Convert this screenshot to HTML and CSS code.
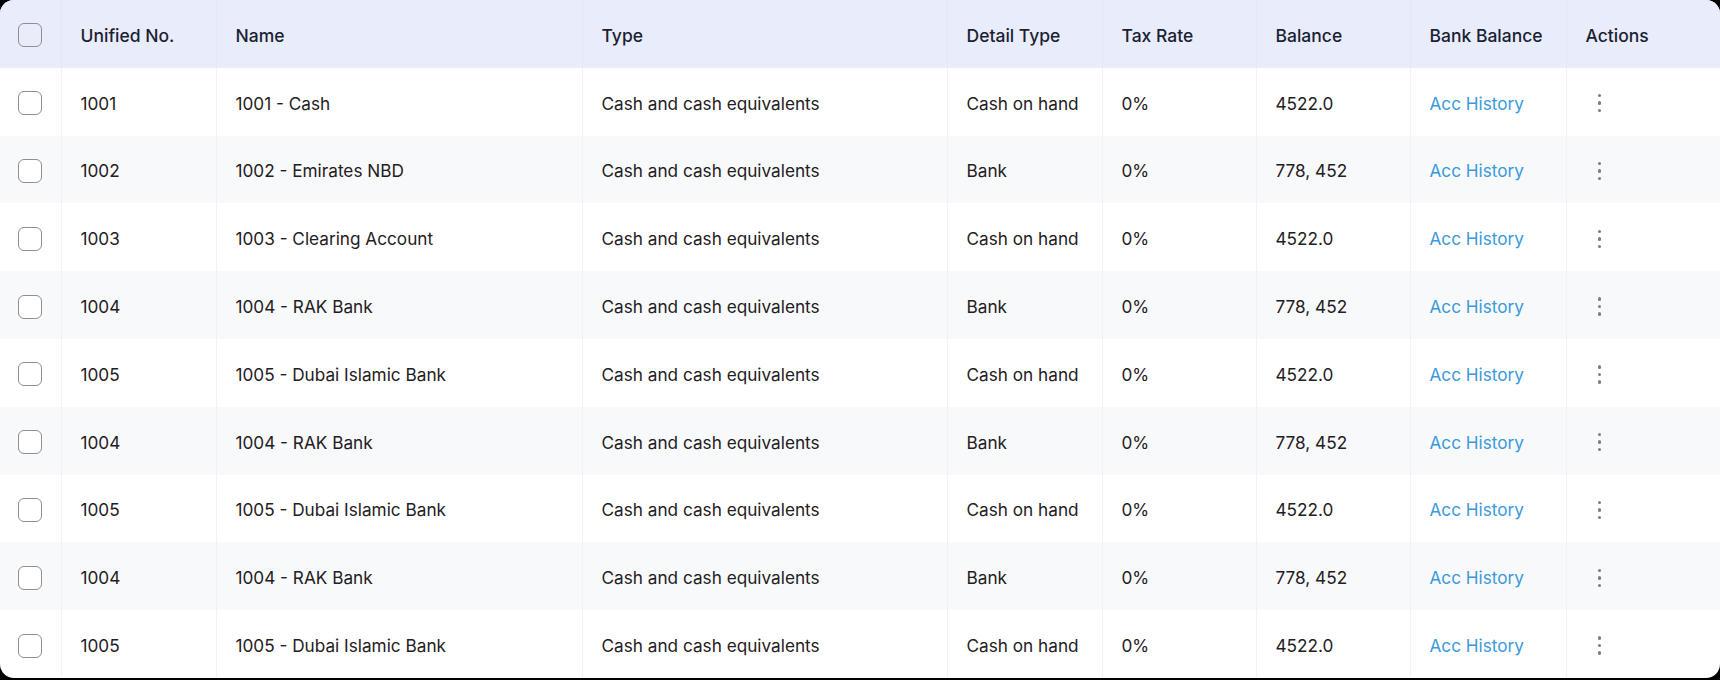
FILE: index.html
```html
<!DOCTYPE html>
<html lang="en">
<head>
<meta charset="utf-8">
<title>Accounts</title>
<link rel="stylesheet" href="styles.css">
</head>
<body>
<div class="card">
  <table class="grid">
    <colgroup>
      <col class="c-check"><col class="c-no"><col class="c-name"><col class="c-type"><col class="c-detail"><col class="c-tax"><col class="c-bal"><col class="c-bank"><col class="c-act">
    </colgroup>
    <thead>
      <tr>
        <th><span class="cb"></span></th>
        <th>Unified No.</th>
        <th>Name</th>
        <th>Type</th>
        <th>Detail Type</th>
        <th>Tax Rate</th>
        <th>Balance</th>
        <th>Bank Balance</th>
        <th>Actions</th>
      </tr>
    </thead>
    <tbody>
      <tr><td><span class="cb"></span></td><td>1001</td><td>1001 - Cash</td><td>Cash and cash equivalents</td><td>Cash on hand</td><td>0%</td><td>4522.0</td><td><a class="link">Acc History</a></td><td><span class="dots"><i></i><i></i><i></i></span></td></tr>
      <tr><td><span class="cb"></span></td><td>1002</td><td>1002 - Emirates NBD</td><td>Cash and cash equivalents</td><td>Bank</td><td>0%</td><td>778, 452</td><td><a class="link">Acc History</a></td><td><span class="dots"><i></i><i></i><i></i></span></td></tr>
      <tr><td><span class="cb"></span></td><td>1003</td><td>1003 - Clearing Account</td><td>Cash and cash equivalents</td><td>Cash on hand</td><td>0%</td><td>4522.0</td><td><a class="link">Acc History</a></td><td><span class="dots"><i></i><i></i><i></i></span></td></tr>
      <tr><td><span class="cb"></span></td><td>1004</td><td>1004 - RAK Bank</td><td>Cash and cash equivalents</td><td>Bank</td><td>0%</td><td>778, 452</td><td><a class="link">Acc History</a></td><td><span class="dots"><i></i><i></i><i></i></span></td></tr>
      <tr><td><span class="cb"></span></td><td>1005</td><td>1005 - Dubai Islamic Bank</td><td>Cash and cash equivalents</td><td>Cash on hand</td><td>0%</td><td>4522.0</td><td><a class="link">Acc History</a></td><td><span class="dots"><i></i><i></i><i></i></span></td></tr>
      <tr><td><span class="cb"></span></td><td>1004</td><td>1004 - RAK Bank</td><td>Cash and cash equivalents</td><td>Bank</td><td>0%</td><td>778, 452</td><td><a class="link">Acc History</a></td><td><span class="dots"><i></i><i></i><i></i></span></td></tr>
      <tr><td><span class="cb"></span></td><td>1005</td><td>1005 - Dubai Islamic Bank</td><td>Cash and cash equivalents</td><td>Cash on hand</td><td>0%</td><td>4522.0</td><td><a class="link">Acc History</a></td><td><span class="dots"><i></i><i></i><i></i></span></td></tr>
      <tr><td><span class="cb"></span></td><td>1004</td><td>1004 - RAK Bank</td><td>Cash and cash equivalents</td><td>Bank</td><td>0%</td><td>778, 452</td><td><a class="link">Acc History</a></td><td><span class="dots"><i></i><i></i><i></i></span></td></tr>
      <tr><td><span class="cb"></span></td><td>1005</td><td>1005 - Dubai Islamic Bank</td><td>Cash and cash equivalents</td><td>Cash on hand</td><td>0%</td><td>4522.0</td><td><a class="link">Acc History</a></td><td><span class="dots"><i></i><i></i><i></i></span></td></tr>
    </tbody>
  </table>
</div>
</body>
</html>
```

FILE: styles.css
```css
html, body {
  margin: 0;
  padding: 0;
  background: #000;
}
body {
  width: 1720px;
  height: 680px;
  overflow: hidden;
  font-family: Inter, "Noto Sans", "Liberation Sans", sans-serif;
}
.card {
  width: 1720px;
  height: 678px;
  background: #fff;
  border-radius: 14px;
  overflow: hidden;
}
.grid {
  width: 1720px;
  border-collapse: collapse;
  table-layout: fixed;
}
.c-check { width: 61px; }
.c-no { width: 155px; }
.c-name { width: 366px; }
.c-type { width: 365px; }
.c-detail { width: 155px; }
.c-tax { width: 154px; }
.c-bal { width: 154px; }
.c-bank { width: 156px; }
.c-act { width: 154px; }

.grid th,
.grid td {
  height: 67.8px;
  padding: 3px 0 0 19px;
  text-align: left;
  vertical-align: middle;
  border-left: 1px solid #f1f2f5;
  white-space: nowrap;
  box-sizing: border-box;
}
.grid th:first-child,
.grid td:first-child {
  border-left: none;
  padding-left: 18px;
}
.grid th {
  background: #e9ecfb;
  font-size: 17.5px;
  font-weight: 500;
  color: #1b1f33;
  border-left-color: #e4e7f6;
}
.grid td {
  font-size: 17.2px;
  font-weight: 400;
  color: #1f2023;
}
.grid tbody tr:nth-child(even) td {
  background: #f8f9fa;
}
.cb {
  display: block;
  width: 24px;
  height: 24px;
  box-sizing: border-box;
  border: 1.5px solid #8e8e93;
  border-radius: 6px;
  background: #fff;
}
.grid th .cb {
  background: transparent;
}
.link {
  color: #3c99da;
  text-decoration: none;
}
.dots {
  display: flex;
  flex-direction: column;
  gap: 4px;
  width: 4px;
  margin-left: 12px;
}
.dots i {
  display: block;
  width: 3.5px;
  height: 3.5px;
  border-radius: 50%;
  background: #7d7d82;
}
```
